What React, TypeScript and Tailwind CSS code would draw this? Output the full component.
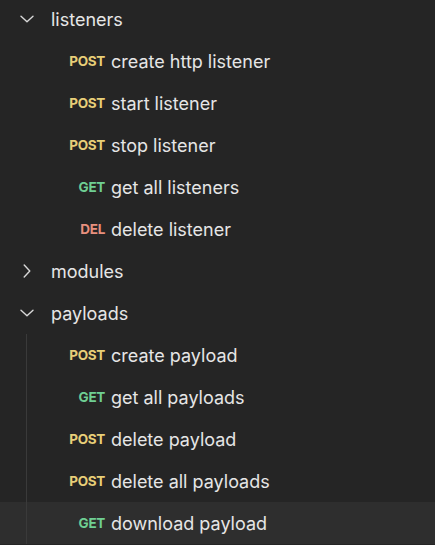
import React from "react";

type Method = "POST" | "GET" | "DEL";

const methodColor: Record<Method, string> = {
  POST: "text-[#e8cf78]",
  GET: "text-[#6fcf93]",
  DEL: "text-[#e8907e]",
};

function ChevronDown() {
  return (
    <svg width="14" height="8" viewBox="0 0 14 8" fill="none" stroke="#d8d8d8" strokeWidth="1.4" strokeLinecap="round" strokeLinejoin="round">
      <path d="M1 1.2 7 6.8 13 1.2" />
    </svg>
  );
}

function ChevronRight() {
  return (
    <svg width="8" height="14" viewBox="0 0 8 14" fill="none" stroke="#d8d8d8" strokeWidth="1.4" strokeLinecap="round" strokeLinejoin="round">
      <path d="M1.2 1 6.8 7 1.2 13" />
    </svg>
  );
}

function Folder({ name, open }: { name: string; open: boolean }) {
  return (
    <div className="flex h-[42px] items-center">
      <div className="flex w-[51px] shrink-0 items-center justify-center pl-[3px]">
        {open ? <ChevronDown /> : <ChevronRight />}
      </div>
      <span className="text-[18px] text-[#e6e6e6]">{name}</span>
    </div>
  );
}

function Request({ method, name, hover, line }: { method: Method; name: string; hover?: boolean; line?: boolean }) {
  return (
    <div className={`relative flex h-[42px] items-center ${hover ? "bg-[#2e2e2e]" : ""}`}>
      {line && <div className="absolute left-[26px] top-0 h-full w-px bg-[#3a3a3a]" />}
      <div className="flex w-[105px] shrink-0 justify-end">
        <span className={`text-[13.5px] font-bold tracking-[-0.3px] ${methodColor[method]}`}>{method}</span>
      </div>
      <span className="ml-[6px] text-[18px] text-[#e6e6e6]">{name}</span>
    </div>
  );
}

export default function App() {
  return (
    <div
      className="h-[545px] w-[435px] overflow-hidden bg-[#252525]"
      style={{ fontFamily: "Inter, 'Noto Sans', sans-serif" }}
    >
      <div className="-mt-[2px] flex flex-col">
        <Folder name="listeners" open />
        <Request method="POST" name="create http listener" />
        <Request method="POST" name="start listener" />
        <Request method="POST" name="stop listener" />
        <Request method="GET" name="get all listeners" />
        <Request method="DEL" name="delete listener" />
        <Folder name="modules" open={false} />
        <Folder name="payloads" open />
        <Request method="POST" name="create payload" line />
        <Request method="GET" name="get all payloads" line />
        <Request method="POST" name="delete payload" line />
        <Request method="POST" name="delete all payloads" line />
        <Request method="GET" name="download payload" hover line />
      </div>
    </div>
  );
}
